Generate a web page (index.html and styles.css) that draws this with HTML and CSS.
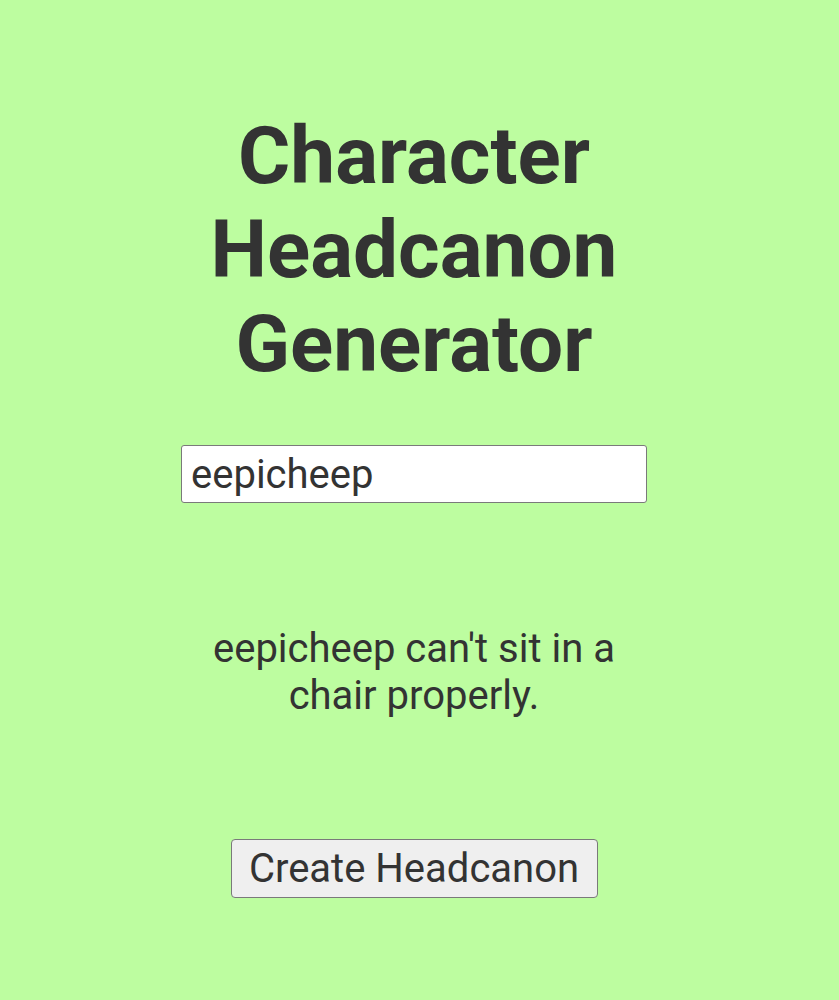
FILE: index.html
```html
<!DOCTYPE html>
<html lang="en">
<head>
    <meta charset="UTF-8">
    <meta name="viewport" content="width=device-width, initial-scale=1.0">
    <title>Character Headcanon Generator</title>
    <link rel="stylesheet" href="styles.css">
</head>
<body>

    <div class="generator">
        <h1>Character Headcanon Generator</h1>

        <input type="text" id="charName" class="name-field" value="eepicheep">

        <p class="result" id="result">eepicheep can't sit in a chair properly.</p>

        <button class="btn" onclick="makeHeadcanon()">Create Headcanon</button>
    </div>

    <script>
        let headcanons = [
            "can't sit in a chair properly.",
            "sleeps with the lights on.",
            "has a secret playlist of sad songs.",
            "talks to plants when nobody is around.",
            "is terrible at keeping secrets."
        ];

        function makeHeadcanon() {
            let name = document.getElementById("charName").value || "Someone";
            let pick = headcanons[Math.floor(Math.random() * headcanons.length)];
            document.getElementById("result").textContent = name + " " + pick;
        }
    </script>

</body>
</html>
```

FILE: styles.css
```css
body {
    font-family: 'Roboto', 'Liberation Sans', sans-serif;
    background: #bdfda0;
    color: #333;
    margin: 0;
    padding: 0 11px 0 0;
}
.generator {
    display: flex;
    flex-direction: column;
    align-items: center;
    padding-top: 109px;
    text-align: center;
}
h1 {
    margin: 0;
    width: 466px;
    font-size: 80px;
    font-weight: 700;
    line-height: normal;
}
.name-field {
    box-sizing: border-box;
    width: 466px;
    height: 58px;
    margin-top: 54px;
    padding: 0 9px;
    font-family: 'Roboto', sans-serif;
    font-size: 40px;
    color: #333;
    background: white;
    border: 1px solid #7a7a7a;
    border-radius: 3px;
}
.result {
    width: 466px;
    margin: 122px 0 0;
    font-size: 40px;
    line-height: normal;
}
.btn {
    box-sizing: border-box;
    width: 367px;
    height: 59px;
    margin-top: 120px;
    padding: 0;
    font-family: 'Roboto', sans-serif;
    font-size: 40px;
    color: #333;
    background: #efefef;
    border: 1px solid #7a7a7a;
    border-radius: 4px;
    cursor: pointer;
}
```
